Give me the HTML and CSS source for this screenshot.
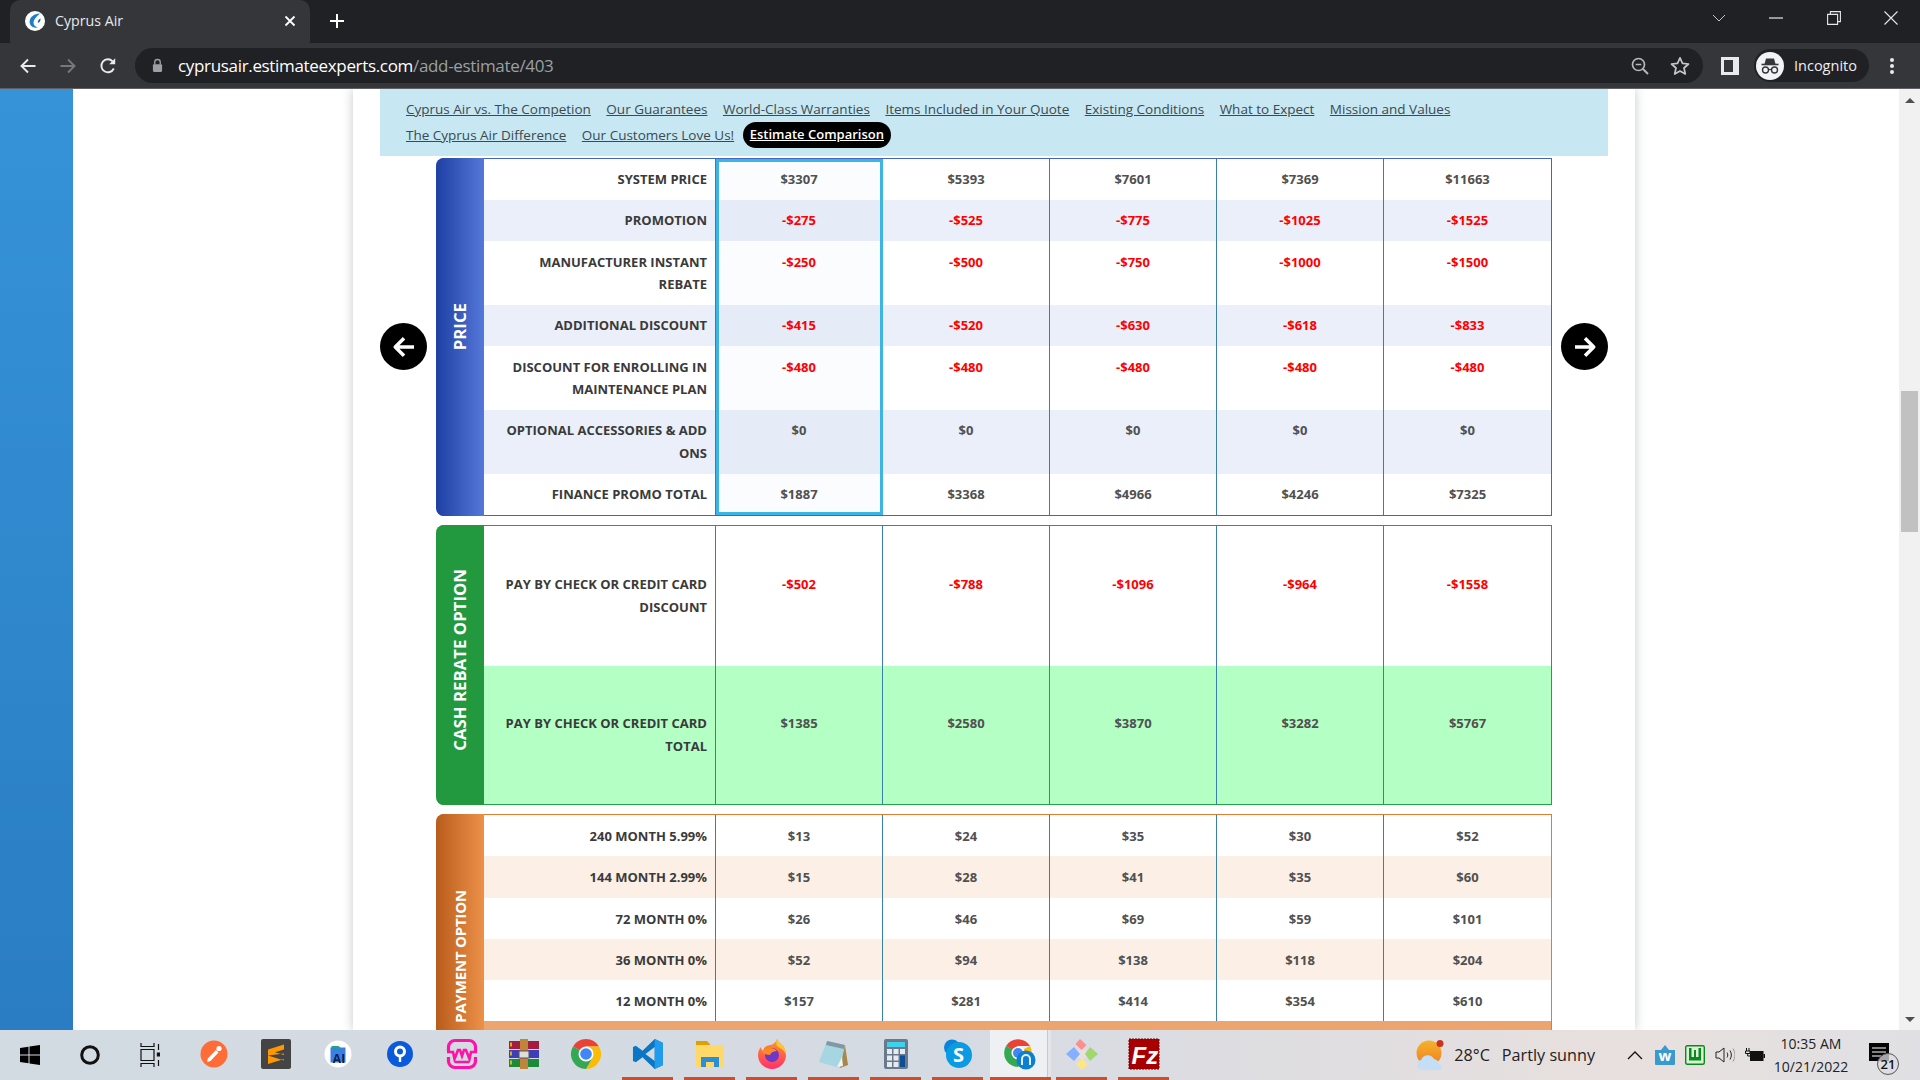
FILE: index.html
```html
<!DOCTYPE html>
<html lang="en">
<head>
<meta charset="utf-8">
<title>Cyprus Air</title>
<link rel="stylesheet" href="styles.css">
</head>
<body>
<header class="chrome">
  <div class="tabstrip">
    <div class="tab">
      <svg class="favicon" viewBox="0 0 20 20"><circle cx="10" cy="10" r="10" fill="#fff"/><path d="M15 2.500C9.500 2.500 4.500 6 4.600 11c.1 4.300 4.200 6.700 8.400 5.200-2.700-.1-4.600-2-4.500-4.600.1-3.200 3-6 6.500-9.100z" fill="#1d7fc4"/><path d="M15.500 7.500c-1.700.8-3 2.500-2.700 4.200 1.500 0 3-1.500 2.700-4.200z" fill="#0f5fa5"/></svg>
      <span class="tab-title">Cyprus Air</span>
      <svg class="tab-close" viewBox="0 0 12 12"><path d="M1.500 1.500l9 9M10.500 1.500l-9 9" stroke="#fff" stroke-width="1.800"/></svg>
    </div>
    <svg class="new-tab" viewBox="0 0 16 16"><path d="M8 1v14M1 8h14" stroke="#fff" stroke-width="2"/></svg>
    <div class="win-controls">
      <span class="win-btn"><svg viewBox="0 0 14 8" width="14" height="8"><path d="M1 1l6 6 6-6" fill="none" stroke="#c4c5c7" stroke-width="1"/></svg></span>
      <span class="win-btn"><svg viewBox="0 0 14 2" width="14" height="2"><path d="M0 1h14" stroke="#e8e8e8" stroke-width="1.200"/></svg></span>
      <span class="win-btn"><svg viewBox="0 0 14 14" width="14" height="14"><path d="M.6 3.400h10v10H.6zM3.400 3.400V.6h10v10h-2.800" fill="none" stroke="#e8e8e8" stroke-width="1.100"/></svg></span>
      <span class="win-btn"><svg viewBox="0 0 14 14" width="14" height="14"><path d="M.5.5l13 13M13.500.5l-13 13" stroke="#e8e8e8" stroke-width="1.100"/></svg></span>
    </div>
  </div>
  <div class="toolbar">
    <span class="tool"><svg viewBox="0 0 18 18" width="18" height="18"><path d="M16.500 9H2.500M9 2.500L2.500 9 9 15.500" fill="none" stroke="#e8eaed" stroke-width="1.900"/></svg></span>
    <span class="tool"><svg viewBox="0 0 18 18" width="18" height="18"><path d="M1.500 9h14M9 2.500L15.500 9 9 15.500" fill="none" stroke="#77787b" stroke-width="1.900"/></svg></span>
    <span class="tool"><svg viewBox="0 0 18 18" width="18" height="18"><path d="M14.800 11.500A6.500 6.500 0 1 1 13.600 4.300" fill="none" stroke="#e8eaed" stroke-width="1.900"/><path d="M16.200 1.300v6h-6z" fill="#e8eaed"/></svg></span>
    <div class="omnibox">
      <svg class="lock" viewBox="0 0 12 16" width="11" height="15"><path d="M3 7V4.500a3 3 0 0 1 6 0V7" fill="none" stroke="#9aa0a6" stroke-width="1.500"/><rect x="1" y="6.500" width="10" height="8.500" rx="1.200" fill="#9aa0a6"/></svg>
      <span class="url">cyprusair.estimateexperts.com<span class="url-path">/add-estimate/403</span></span>
      <svg class="omni-zoom" viewBox="0 0 20 20" width="20" height="20"><circle cx="8.500" cy="8.500" r="6" fill="none" stroke="#b5b7ba" stroke-width="1.700"/><path d="M13 13l5 5" stroke="#b5b7ba" stroke-width="2"/><path d="M5.700 8.500h5.600" stroke="#b5b7ba" stroke-width="1.500"/></svg>
      <svg class="omni-star" viewBox="0 0 20 20" width="20" height="20"><path d="M10 1.800l2.500 5.500 6 .7-4.500 4 1.300 6L10 15l-5.300 3 1.300-6-4.500-4 6-.7z" fill="none" stroke="#c4c6c9" stroke-width="1.700" stroke-linejoin="round"/></svg>
    </div>
    <svg class="side-panel" viewBox="0 0 18 18" width="18" height="18"><rect width="18" height="18" fill="#e8eaed"/><rect x="3" y="3" width="9" height="12" fill="#35363a"/></svg>
    <div class="incognito">
      <svg class="incog-icon" viewBox="0 0 28 28" width="28" height="28"><circle cx="14" cy="14" r="14" fill="#f1f3f4"/><path d="M10 6.500h8l1.500 5.500h-11z" fill="#35363a"/><path d="M5.500 12.500h17" stroke="#35363a" stroke-width="1.600"/><circle cx="9.500" cy="18" r="3" fill="none" stroke="#35363a" stroke-width="1.400"/><circle cx="18.500" cy="18" r="3" fill="none" stroke="#35363a" stroke-width="1.400"/><path d="M12.500 17.500h3" stroke="#35363a" stroke-width="1.200"/></svg>
      <span class="incog-label">Incognito</span>
    </div>
    <svg class="kebab" viewBox="0 0 4 18" width="4" height="18"><circle cx="2" cy="3" r="2" fill="#e8eaed"/><circle cx="2" cy="9" r="2" fill="#e8eaed"/><circle cx="2" cy="15" r="2" fill="#e8eaed"/></svg>
  </div>
</header>

<main class="viewport">
  <div class="site-bg"></div>
  <div class="site-margin">
    <div class="container">
      <nav class="subnav">
        <div class="subnav-row">
          <a class="link">Cyprus Air vs. The Competion</a>
          <a class="link">Our Guarantees</a>
          <a class="link">World-Class Warranties</a>
          <a class="link">Items Included in Your Quote</a>
          <a class="link">Existing Conditions</a>
          <a class="link">What to Expect</a>
          <a class="link">Mission and Values</a>
        </div>
        <div class="subnav-row">
          <a class="link">The Cyprus Air Difference</a>
          <a class="link">Our Customers Love Us!</a>
          <a class="link link-active">Estimate Comparison</a>
        </div>
      </nav>
      <div class="compare">
        <span class="arrow"><svg viewBox="0 0 24 24" width="30" height="30"><path d="M20 12H5M12 5l-7 7 7 7" fill="none" stroke="#fff" stroke-width="2.800" stroke-linejoin="round"/></svg></span>
        <div class="sections">
          <section class="sheet sheet-price">
            <div class="side"><span>PRICE</span></div>
            <div class="selected"></div>
            <div class="row"><div class="label">SYSTEM PRICE</div><div class="val">$3307</div><div class="val">$5393</div><div class="val">$7601</div><div class="val">$7369</div><div class="val">$11663</div></div>
            <div class="row alt"><div class="label">PROMOTION</div><div class="val neg">-$275</div><div class="val neg">-$525</div><div class="val neg">-$775</div><div class="val neg">-$1025</div><div class="val neg">-$1525</div></div>
            <div class="row wrap"><div class="label">MANUFACTURER INSTANT REBATE</div><div class="val neg">-$250</div><div class="val neg">-$500</div><div class="val neg">-$750</div><div class="val neg">-$1000</div><div class="val neg">-$1500</div></div>
            <div class="row alt"><div class="label">ADDITIONAL DISCOUNT</div><div class="val neg">-$415</div><div class="val neg">-$520</div><div class="val neg">-$630</div><div class="val neg">-$618</div><div class="val neg">-$833</div></div>
            <div class="row wrap"><div class="label">DISCOUNT FOR ENROLLING IN MAINTENANCE PLAN</div><div class="val neg">-$480</div><div class="val neg">-$480</div><div class="val neg">-$480</div><div class="val neg">-$480</div><div class="val neg">-$480</div></div>
            <div class="row alt"><div class="label">OPTIONAL ACCESSORIES &amp; ADD ONS</div><div class="val">$0</div><div class="val">$0</div><div class="val">$0</div><div class="val">$0</div><div class="val">$0</div></div>
            <div class="row"><div class="label">FINANCE PROMO TOTAL</div><div class="val">$1887</div><div class="val">$3368</div><div class="val">$4966</div><div class="val">$4246</div><div class="val">$7325</div></div>
          </section>
          <section class="sheet sheet-cash">
            <div class="side"><span>CASH REBATE OPTION</span></div>
            <div class="row"><div class="label">PAY BY CHECK OR CREDIT CARD DISCOUNT</div><div class="val neg">-$502</div><div class="val neg">-$788</div><div class="val neg">-$1096</div><div class="val neg">-$964</div><div class="val neg">-$1558</div></div>
            <div class="row alt"><div class="label">PAY BY CHECK OR CREDIT CARD TOTAL</div><div class="val">$1385</div><div class="val">$2580</div><div class="val">$3870</div><div class="val">$3282</div><div class="val">$5767</div></div>
          </section>
          <section class="sheet sheet-pay">
            <div class="side"><span>PAYMENT OPTION</span></div>
            <div class="row"><div class="label">240 MONTH 5.99%</div><div class="val">$13</div><div class="val">$24</div><div class="val">$35</div><div class="val">$30</div><div class="val">$52</div></div>
            <div class="row alt"><div class="label">144 MONTH 2.99%</div><div class="val">$15</div><div class="val">$28</div><div class="val">$41</div><div class="val">$35</div><div class="val">$60</div></div>
            <div class="row"><div class="label">72 MONTH 0%</div><div class="val">$26</div><div class="val">$46</div><div class="val">$69</div><div class="val">$59</div><div class="val">$101</div></div>
            <div class="row alt"><div class="label">36 MONTH 0%</div><div class="val">$52</div><div class="val">$94</div><div class="val">$138</div><div class="val">$118</div><div class="val">$204</div></div>
            <div class="row"><div class="label">12 MONTH 0%</div><div class="val">$157</div><div class="val">$281</div><div class="val">$414</div><div class="val">$354</div><div class="val">$610</div></div>
            <div class="pay-foot"></div>
          </section>
        </div>
        <span class="arrow"><svg viewBox="0 0 24 24" width="30" height="30"><path d="M4 12h15M12 5l7 7-7 7" fill="none" stroke="#fff" stroke-width="2.800" stroke-linejoin="round"/></svg></span>
      </div>
    </div>
  </div>
  <div class="scrollbar">
    <svg viewBox="0 0 10 5" width="10" height="5"><path d="M0 5l5-5 5 5z" fill="#505050"/></svg>
    <div class="scroll-track"><div class="scroll-thumb"></div></div>
    <svg viewBox="0 0 10 5" width="10" height="5"><path d="M0 0l5 5 5-5z" fill="#505050"/></svg>
  </div>
</main>

<footer class="taskbar">
  <span class="sys"><svg viewBox="0 0 20 20" width="20" height="20"><path d="M0 3l8.500-1.300v7.800H0zM9.500 1.500L20 0v9.500H9.500zM0 10.500h8.500v7.800L0 17zM9.500 10.500H20V20L9.500 18.500z" fill="#000"/></svg></span>
  <span class="sys"><svg viewBox="0 0 20 20" width="20" height="20"><circle cx="10" cy="10" r="8.300" fill="none" stroke="#111" stroke-width="3"/></svg></span>
  <span class="sys"><svg viewBox="0 0 20 24" width="20" height="24"><path d="M1 0v3.500h13V0M1 24v-3.500h13V24M1 6.500h13v11H1zM18.500 1v6M18.500 17v6" fill="none" stroke="#111" stroke-width="1.200"/><rect x="16.800" y="9.500" width="3.200" height="4" fill="#111"/></svg></span>
  <div class="apps">
    <span class="app"><svg viewBox="0 0 32 32"><circle cx="16" cy="16" r="13.500" fill="#ff6c37"/><path d="M9 24l.8-3.500L18 12l2.500 2.500-8 8.500z" fill="#fff"/><circle cx="21" cy="10.500" r="2.600" fill="#fff"/></svg></span>
    <span class="app"><svg viewBox="0 0 32 32"><rect x="1" y="1" width="30" height="30" rx="2" fill="#444"/><path d="M24 6.500L8 11.500v6l16 5v-5.500l-9-2.800 9-2.700zM8 17.500l16-2v5.500L8 26z" fill="#ff9800"/></svg></span>
    <span class="app"><svg viewBox="0 0 32 32"><circle cx="16" cy="16" r="13.500" fill="#fff"/><path d="M8.500 9.500h15v15h-15z" fill="#3b7fe6"/><path d="M9.500 8h7l3 2.500h-10z" fill="#23a37f"/><text x="17" y="24.500" class="svg-ai">AI</text></svg></span>
    <span class="app"><svg viewBox="0 0 32 32"><circle cx="16" cy="16" r="13" fill="#0a5bdc"/><circle cx="16" cy="13.500" r="4.500" fill="none" stroke="#fff" stroke-width="3"/><rect x="14.800" y="18" width="2.400" height="6" fill="#fff"/></svg></span>
    <span class="app"><svg viewBox="0 0 32 32"><path d="M2.500 13V9A6.500 6.500 0 0 1 9 2.500h14A6.500 6.500 0 0 1 29.500 9v4M2.500 19v4A6.500 6.500 0 0 0 9 29.500h14a6.500 6.500 0 0 0 6.500-6.500v-4" fill="none" stroke="#ff12a6" stroke-width="3.200"/><path d="M1 14h6l1.500 7L12 12h2l2 6 2-6h2l3.500 9L25 14h6M9 24h14" fill="none" stroke="#ff12a6" stroke-width="2.600"/></svg></span>
    <span class="app"><svg viewBox="0 0 32 32"><rect x="1" y="3" width="30" height="8" fill="#a51d3c"/><rect x="1" y="12" width="30" height="8" fill="#3d3fb8"/><rect x="1" y="21" width="30" height="8" fill="#1d8a3a"/><rect x="12" y="1" width="8" height="30" fill="#bf853b"/><rect x="11" y="13" width="10" height="7" fill="#ddd" stroke="#555" stroke-width="1"/><path d="M3 4.500v4M3 13.500v4M3 22.500v4" stroke="#ffd200" stroke-width="1.500"/></svg></span>
    <span class="app"><svg viewBox="0 0 32 32"><path d="M3 8.500A15 15 0 0 1 29 8.500H16L9.500 12z" fill="#ea4335"/><path d="M29 8.500A15 15 0 0 1 16 31l6.500-11.250V12L16 8.500z" fill="#fbbc05"/><path d="M3 8.500A15 15 0 0 0 16 31l6.500-11.250H16L9.500 12z" fill="#34a853"/><circle cx="16" cy="16" r="7.500" fill="#fff"/><circle cx="16" cy="16" r="5.800" fill="#4285f4"/></svg></span>
    <span class="app run"><svg viewBox="0 0 100 100"><path d="M96 15L71 3 33 40 12 24 3 28v44l9 4 21-16 38 37 25-12zM71 72L42 50l29-22z" fill="#0a76c4" fill-rule="evenodd"/><path d="M71 3l25 12v70L71 97z" fill="#1f9cf0"/></svg></span>
    <span class="app run"><svg viewBox="0 0 32 32"><path d="M2 3h11l3 3v5H2z" fill="#e0a100"/><rect x="2" y="7" width="28" height="22" rx="1" fill="#ffd86a"/><path d="M7 29V19h18v10h-5v-5h-8v5z" fill="#2b8fd8"/></svg></span>
    <span class="app run"><svg viewBox="0 0 32 32"><defs><linearGradient id="ff" x1="0" y1="0" x2="0" y2="1"><stop offset="0" stop-color="#ff9a1f"/><stop offset="1" stop-color="#ff2f6e"/></linearGradient></defs><path d="M21 1c1 4 9 6 9 16 0 8-6.500 14-14 14S2 25 2 17c0-3 1-6 3-8 0 2 1 3 2 4 1-4 4-6 8-6 3-1 5-3 6-6z" fill="url(#ff)"/><path d="M21 1c1 4 9 6 9 16-2-6-7-7-9-9-1-2-1-4 0-7z" fill="#ffc62e"/><circle cx="16" cy="17" r="7" fill="#6e36c9"/><path d="M6 14c4-5 12-5 15-1-3 0-6 1-7 4-3 0-6-1-8-3z" fill="#ff8a1f"/></svg></span>
    <span class="app run"><svg viewBox="0 0 32 32"><path d="M9 3l18 4-5 23L1 24z" fill="#a6d6e2"/><path d="M9 3l18 4-1 4L8 7z" fill="#8296a3"/><path d="M27 7l3 20-8 3z" fill="#a8874a"/><path d="M19 29l5-10 1 9z" fill="#f0f4f5"/></svg></span>
    <span class="app run"><svg viewBox="0 0 32 32"><rect x="4" y="1" width="24" height="30" rx="2" fill="#6a7a8c"/><rect x="7" y="4" width="18" height="5" fill="#3fd0ee"/><g fill="#e6ebef"><rect x="7" y="11" width="5" height="5"/><rect x="13.500" y="11" width="5" height="5"/><rect x="7" y="17.500" width="5" height="5"/><rect x="13.500" y="17.500" width="5" height="5"/><rect x="7" y="24" width="5" height="5"/><rect x="13.500" y="24" width="5" height="5"/><rect x="20" y="11" width="5" height="5"/></g><rect x="20" y="17.500" width="5" height="11.500" fill="#0e4f94"/></svg></span>
    <span class="app run"><svg viewBox="0 0 32 32"><circle cx="10" cy="9.500" r="8" fill="#0a84d8"/><circle cx="17" cy="17" r="13" fill="#0a9be2"/><text x="16.500" y="24" class="svg-skype">S</text></svg></span>
    <span class="app app-active"><svg viewBox="0 0 32 32"><path d="M2 8A14 14 0 0 1 26 8H14l-6 3.500z" fill="#ea4335"/><path d="M26 8A14 14 0 0 1 14 29l6-10.500V11z" fill="#fbbc05"/><path d="M2 8A14 14 0 0 0 14 29l6-10.500h-6L8 11z" fill="#34a853"/><circle cx="14" cy="15" r="6.500" fill="#fff"/><circle cx="14" cy="15" r="5" fill="#4285f4"/><circle cx="22" cy="22" r="9.500" fill="#0d7fd0"/><path d="M18 27v-6a4 4 0 0 1 8 0v6" fill="none" stroke="#dff0fb" stroke-width="2"/></svg></span>
    <span class="app run"><svg viewBox="0 0 32 32"><path d="M16 9l7 7-7 7-7-7z" fill="#e8e0dc"/><path d="M14 1l6.500 6-5 5-6-6z" fill="#ff8d8d"/><path d="M8 9l6 7-6 7-8-7z" fill="#84b0ff"/><path d="M24 9l8 7-8 7-5-7z" fill="#a0d870"/><path d="M16 21l6 5-6 6-6-6z" fill="#ffe680"/></svg></span>
    <span class="app run"><svg viewBox="0 0 32 32"><rect x="1" y="1" width="30" height="30" fill="#a80000" stroke="#7a0000" stroke-dasharray="2 1"/><text x="3.500" y="26" class="svg-fz">Fz</text></svg></span>
  </div>
  <div class="tray">
    <svg class="weather" viewBox="0 0 28 30" width="28" height="30"><defs><linearGradient id="sun" x1="0" y1="0" x2="0" y2="1"><stop offset="0" stop-color="#f6b32a"/><stop offset="1" stop-color="#ee7f24"/></linearGradient></defs><circle cx="13" cy="13" r="12.500" fill="url(#sun)"/><circle cx="24" cy="3.500" r="3.500" fill="#d0301f"/><path d="M6 30a5 5 0 0 1-1-9.900 7 7 0 0 1 13-1 6 6 0 0 1 5 5.500c3 0 4 5.400-1 5.400z" fill="#c4def5"/></svg>
    <span class="weather-text">28°C</span>
    <span class="weather-text weather-desc">Partly sunny</span>
    <svg class="tray-chevron" viewBox="0 0 16 9" width="16" height="9"><path d="M1 8l7-7 7 7" fill="none" stroke="#111" stroke-width="1.300"/></svg>
    <svg class="tray-wamp" viewBox="0 0 20 20" width="20" height="20"><path d="M0 5h6l4-5 4 5h6v14a1 1 0 0 1-1 1H1a1 1 0 0 1-1-1z" fill="#3a9ad0"/><text x="10" y="16" class="svg-wamp">w</text></svg>
    <svg class="tray-green" viewBox="0 0 20 20" width="20" height="20"><rect x=".7" y=".7" width="18.600" height="18.600" rx="1.500" fill="#d9efd9" stroke="#0a8a18" stroke-width="1.400"/><path d="M4 3v12.500h12V3h-2.500v9H11V5H9v7H6.500V3z" fill="#0a8a18"/></svg>
    <svg class="tray-sound" viewBox="0 0 20 20" width="20" height="20"><path d="M1 7h3l5-4v14l-5-4H1z" fill="none" stroke="#222" stroke-width="1"/><path d="M12 7.500c1 1.500 1 3.500 0 5M15 5.500c1.800 3 1.800 6 0 9" fill="none" stroke="#222" stroke-width="1"/><path d="M18 3.500c2.500 4 2.500 9 0 13" fill="none" stroke="#999" stroke-width="1"/></svg>
    <svg class="tray-batt" viewBox="0 0 20 14" width="20" height="14"><path d="M1.500 0v3M4 0v3M.5 3h4.500v2.500H.5zM2.700 5.500V8H5" stroke="#111" fill="none"/><rect x="5.500" y="3.500" width="12.500" height="9" fill="#111" stroke="#111"/><rect x="18.500" y="6" width="1.500" height="4" fill="#111"/></svg>
    <div class="clock"><span>10:35 AM</span><span>10/21/2022</span></div>
    <div class="notify">
      <svg viewBox="0 0 20 18" width="20" height="18"><rect width="20" height="18" fill="#050505"/><path d="M3 5h14M3 9h14M3 13h9" stroke="#fff" stroke-width="1.200"/></svg>
      <span class="notify-badge">21</span>
    </div>
  </div>
</footer>
</body>
</html>
```

FILE: styles.css
```css
* { box-sizing: border-box; }
html, body { margin: 0; height: 100%; }
body {
  width: 1920px;
  height: 1080px;
  overflow: hidden;
  display: flex;
  flex-direction: column;
  font-family: "Open Sans", "Noto Sans", sans-serif;
  background: #fff;
}

/* browser chrome */
.chrome { flex: none; background: #202124; color: #fff; }
.tabstrip { height: 43px; display: flex; align-items: flex-end; padding-left: 10px; }
.tab {
  width: 300px; height: 43px;
  background: #35363a;
  border-radius: 10px 10px 0 0;
  display: flex; align-items: center;
  padding: 0 14px 2px 15px;
}
.favicon { width: 20px; height: 20px; flex: none; }
.tab-title { margin-left: 10px; font-size: 14.200px; color: #e8eaed; flex: 1; }
.tab-close { width: 12px; height: 12px; flex: none; }
.new-tab { width: 16px; height: 16px; margin: 0 0 14px 19px; flex: none; }
.win-controls { margin-left: auto; align-self: stretch; display: flex; }
.win-btn { width: 57.500px; display: flex; align-items: center; justify-content: center; padding-bottom: 7px; }

.toolbar {
  height: 46px;
  background: #35363a;
  border-bottom: 1px solid #5f6063;
  display: flex; align-items: center;
  padding-left: 8px;
}
.tool { width: 40px; display: flex; justify-content: center; flex: none; }
.omnibox {
  width: 1568px; height: 35px;
  margin-left: 7px;
  background: #202124;
  border-radius: 18px;
  display: flex; align-items: center;
  padding: 0 13px 0 17px;
  flex: none;
}
.url { margin-left: 15px; font-size: 17px; color: #fff; letter-spacing: -.33px; flex: 1; }
.url-path { color: #9aa0a6; }
.omni-zoom { margin-right: 20px; }
.side-panel { margin-left: 18px; flex: none; }
.incognito {
  width: 115px; height: 33px;
  margin-left: 15px;
  background: #202124;
  border-radius: 17px;
  display: flex; align-items: center;
  padding-left: 2px;
  flex: none;
}
.incog-label { margin-left: 10px; font-size: 14.500px; color: #eee; }
.kebab { margin-left: 21px; flex: none; }

/* page viewport */
.viewport { flex: 1; min-height: 0; display: flex; overflow: hidden; background: #fff; }
.site-bg { width: 73px; flex: none; background: linear-gradient(#3693d8, #2a7dc2); }
.site-margin { flex: 1; padding-left: 280px; overflow: hidden; }
.container { width: 1282px; height: 100%; padding-left: 27px; box-shadow: 0 0 10px rgba(40, 60, 70, .28); background: #fff; overflow: hidden; }
.scrollbar { width: 21px; flex: none; background: #f1f1f1; display: flex; flex-direction: column; align-items: center; padding: 9px 0 8px; }
.scroll-track { flex: 1; width: 100%; padding: 288px 2px 0; }
.scroll-thumb { height: 141px; background: #c1c1c1; }

.subnav { width: 1228px; height: 67px; background: #c7e7f2; padding: 7px 26px 0; }
.subnav-row { display: flex; gap: 15.500px; height: 26px; align-items: center; font-size: 13.500px; }
.link { color: #3b4a50; text-decoration: underline; white-space: nowrap; }
.link-active {
  margin-left: -7px;
  background: #000; color: #fff; font-weight: 600; font-size: 13px;
  padding: 0 7px; height: 26px; line-height: 24px;
  border-radius: 13px;
}

.compare { display: flex; gap: 9px; margin-top: 2px; align-items: flex-start; }
.arrow {
  width: 47px; height: 47px; flex: none;
  margin-top: 165px;
  background: #000; border-radius: 50%;
  display: flex; align-items: center; justify-content: center;
}
.sections { width: 1116px; flex: none; display: flex; flex-direction: column; gap: 9px; }

/* comparison sheets */
.sheet {
  position: relative;
  display: grid;
  grid-template-columns: 48px 232px repeat(5, 167px);
  border: 1px solid;
  border-left: 0;
  border-radius: 8px 0 0 8px;
}
.sheet-price { border-color: #3f66c2; grid-template-rows: 41px 41px 64px 41px 64px 64px 41px; }
.sheet-cash { border-color: #24a148; grid-template-rows: 140px 138px; }
.sheet-pay { border-color: #e07c33; border-bottom: 0; grid-template-rows: 41px 42px 41px 41px 41px 77px; }

.side {
  grid-column: 1;
  grid-row: 1 / -1;
  margin: -1px 0;
  border-radius: 8px 0 0 8px;
  display: flex; align-items: center; justify-content: center;
  padding-right: 2px;
  color: #fff; font-size: 16.800px; font-weight: 700;
}
.side span { writing-mode: vertical-rl; transform: rotate(180deg); white-space: nowrap; }
.sheet-price .side { background: linear-gradient(90deg, #1e3fa3, #5478d9); padding-bottom: 20px; }
.sheet-cash .side { background: #23993f; padding-bottom: 10px; }
.sheet-pay .side { background: linear-gradient(90deg, #b95c1b, #ec9149); margin-bottom: 0; padding-right: 0; font-size: 15px; letter-spacing: -.2px; }

.row { display: contents; }
.row > div { border-right: 1px solid #3a7fa9; font-size: 13px; font-weight: 700; line-height: 22.500px; padding-top: 9px; }
.row > div:last-child { border-right: 0; }
.row.wrap > div { line-height: 22px; padding-top: 10px; }
.label { text-align: right; padding-right: 8px; padding-left: 8px; color: #3a3a3a; }
.val { text-align: center; color: #505050; }
.neg { color: #f00; }
.sheet-price .alt > div { background: #eaeff9; }
.sheet-cash .row > div { padding-top: 47px; }
.sheet-cash .row.alt > div { padding-top: 46px; background: #b3ffc4; }
.sheet-pay .row > div { padding-top: 10px; }
.sheet-pay .alt > div { background: #fcefe6; }
.pay-foot { grid-column: 2 / -1; background: #eda56f; }

.selected {
  position: absolute;
  grid-column: 3 / 4;
  grid-row: 1 / -1;
  top: 0; bottom: 0; left: 0; right: 0;
  border: 3px solid #3cb4e4;
  background: rgba(90, 140, 190, .025);
}

/* taskbar */
.taskbar {
  flex: none; height: 50px;
  display: flex; align-items: stretch;
  background: linear-gradient(90deg, #d2dae2, #d6dbe3 50%, #e8e0de 85%, #e0e0e4);
}
.sys { width: 60px; flex: none; display: flex; align-items: center; justify-content: center; }
.apps { display: flex; margin-left: 2.500px; }
.app {
  width: 51px; margin: 0 5.500px;
  border-bottom: 3px solid transparent;
  display: flex; align-items: center; justify-content: center;
  padding-top: 1px;
}
.app svg { width: 32px; height: 32px; flex: none; }
.run { border-bottom-color: #c8502e; }
.app-active {
  width: 60.500px; margin: 0 0 0 1.500px;
  background: linear-gradient(90deg, #eff0f3 56.500px, #c6c9ce 56.500px, #c6c9ce 57.500px, #e3e5e9 57.500px);
  border-bottom-color: #c8502e;
}
.svg-ai { font: 700 12px "Open Sans", sans-serif; fill: #10204a; text-anchor: middle; }
.svg-skype { font: 700 20px "Open Sans", sans-serif; fill: #fff; text-anchor: middle; }
.svg-fz { font: italic 700 24px "Liberation Sans", sans-serif; fill: #fff; }
.svg-wamp { font: 700 15px "Open Sans", sans-serif; fill: #fff; text-anchor: middle; }

.tray { margin-left: auto; display: flex; align-items: center; }
.weather { flex: none; }
.weather-text { font-size: 16.200px; color: #222; margin-left: 10px; }
.weather-desc { margin-left: 12px; }
.tray-chevron { margin-left: 32px; flex: none; }
.tray-wamp { margin-left: 12px; flex: none; }
.tray-green { margin-left: 10px; flex: none; }
.tray-sound { margin-left: 10px; flex: none; }
.tray-batt { margin-left: 10px; flex: none; }
.clock { margin-left: 8px; width: 76px; display: flex; flex-direction: column; align-items: center; font-size: 14px; line-height: 23px; color: #222; white-space: nowrap; }
.notify { position: relative; margin-left: 20px; margin-right: 31px; height: 18px; margin-bottom: 7px; }
.notify svg { display: block; }
.notify-badge {
  position: absolute; left: 8px; top: 10px;
  width: 22px; height: 22px;
  border: 1px solid #555; border-radius: 50%;
  background: rgba(220, 220, 225, .75);
  font-size: 13px; font-weight: 600; line-height: 20px; text-align: center; color: #111;
}
```
